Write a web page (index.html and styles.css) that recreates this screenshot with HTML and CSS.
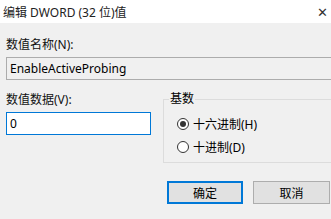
FILE: index.html
```html
<!DOCTYPE html>
<html lang="zh-CN">
<head>
  <meta charset="UTF-8" />
  <title>编辑 DWORD (32 位)值</title>
  <link rel="stylesheet" href="styles.css">
</head>
<body>
  <div class="titlebar">
    <span class="title">编辑 DWORD (32 位)值</span>
    <span class="close">✕</span>
  </div>

  <div class="content">
    <div class="label">数值名称(N):</div>
    <div class="field readonly">EnableActiveProbing</div>

    <div class="row">
      <div class="data">
        <div class="label">数值数据(V):</div>
        <div class="field active">0</div>
      </div>

      <div class="group">
        <span class="group-title">基数</span>
        <div class="radio"><span class="dot checked"></span>十六进制(H)</div>
        <div class="radio"><span class="dot"></span>十进制(D)</div>
      </div>
    </div>

    <div class="buttons">
      <button class="btn default">确定</button>
      <button class="btn">取消</button>
    </div>
  </div>
</body>
</html>
```

FILE: styles.css
```css
* {
  margin: 0;
  padding: 0;
  box-sizing: border-box;
}

html {
  overflow: hidden;
}

body {
  width: 331px;
  height: 219px;
  overflow: hidden;
  background: #f0f0f0;
  font-family: "Noto Sans", "Noto Sans CJK SC", sans-serif;
  font-size: 12px;
  color: #000;
}

.titlebar {
  height: 23px;
  background: #ffffff;
  display: flex;
  align-items: center;
  justify-content: space-between;
  padding: 0 3px 0 3px;
}

.title {
  color: #222;
}

.close {
  font-size: 13px;
  color: #333;
}

.content {
  padding-left: 6px;
}

.label {
  line-height: 16px;
  height: 16px;
  color: #111;
}

.content > .label {
  margin-top: 14px;
}

.field {
  height: 23px;
  line-height: 21px;
  padding-left: 3px;
  margin-top: 4px;
  border: 1px solid #7a7a7a;
}

/* the dialog is cut off on the right, so no right border */
.readonly {
  width: 325px;
  background: #f0f0f0;
  border-color: #acacac;
  border-right: none;
}

.active {
  width: 145px;
  background: #fff;
  border-color: #0078d7;
}

.row {
  display: flex;
  margin-top: 12px;
}

.group {
  position: relative;
  margin-left: 12px;
  margin-top: 7px;
  flex: 1;
  height: 64px;
  border: 1px solid #dcdcdc;
  border-right: none;
  padding: 16px 0 0 13px;
}

.group-title {
  position: absolute;
  top: -9px;
  left: 5px;
  padding: 0 1px;
  line-height: 16px;
  background: #f0f0f0;
}

.radio {
  display: flex;
  align-items: center;
  height: 16px;
  margin-bottom: 7px;
}

.dot {
  width: 12px;
  height: 12px;
  border: 1px solid #333;
  border-radius: 50%;
  background: #fff;
  margin-right: 4px;
  display: flex;
  align-items: center;
  justify-content: center;
}

.dot.checked::after {
  content: '';
  width: 6px;
  height: 6px;
  border-radius: 50%;
  background: #333;
}

.buttons {
  display: flex;
  justify-content: flex-end;
  gap: 10px;
  margin-top: 18px;
  padding-right: 1px;
}

.btn {
  width: 77px;
  height: 23px;
  font-family: inherit;
  font-size: 12px;
  color: #000;
  background: #e1e1e1;
  border: 1px solid #adadad;
}

.btn.default {
  width: 76px;
  border: 2px solid #0078d7;
}
```
